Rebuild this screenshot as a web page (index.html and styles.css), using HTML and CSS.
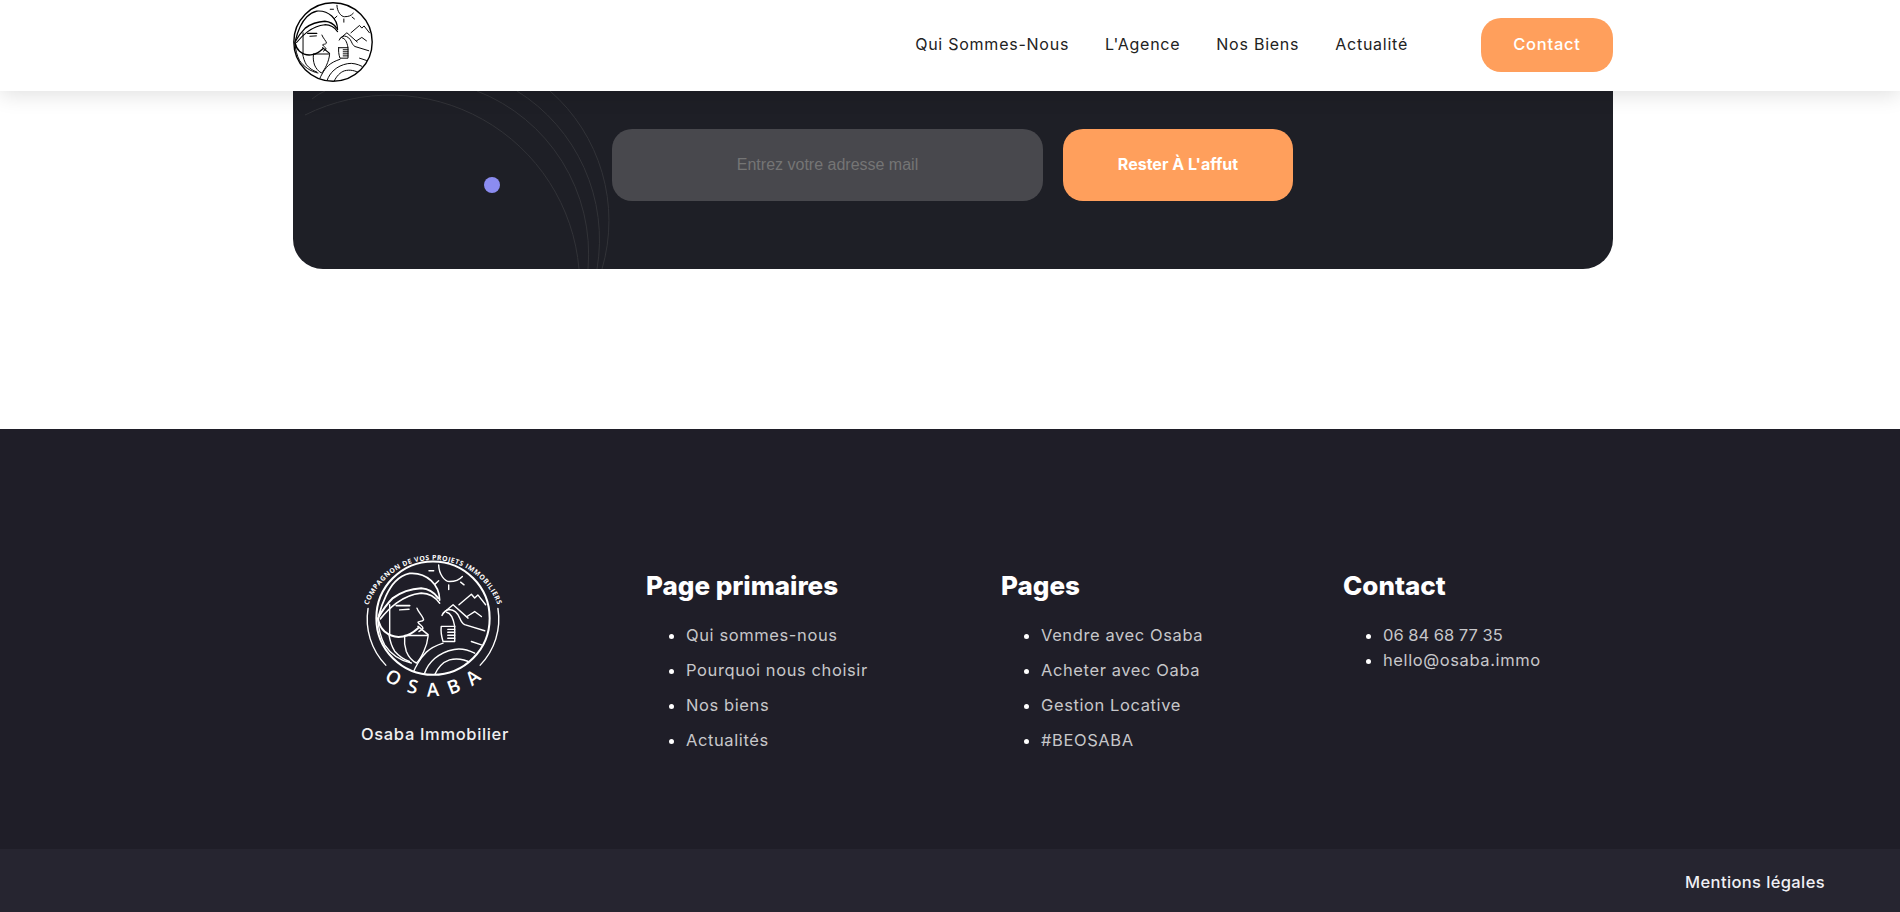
FILE: index.html
```html
<!DOCTYPE html>
<html>

<head>
    <title>Osaba Immobilier</title>
    <link rel="stylesheet" href="styles.css">
</head>

<body>
    <svg class="defs" width="0" height="0">
        <defs>
            <clipPath id="disc">
                <circle cx="50" cy="50" r="48"></circle>
            </clipPath>
            <g id="osaba-art" fill="none" stroke="currentColor" stroke-linecap="round" stroke-linejoin="round">
                <circle cx="50" cy="50" r="48" stroke-width="1.7"></circle>
                <g clip-path="url(#disc)" stroke-width="1.2">
                    <!-- sun -->
                    <path d="M54.8 5C55 13 60 19 64 19C69 19 72 18 74.9 14.7"></path>
                    <path d="M46.6 9.9H50.6M54.8 18.4L51.7 21.2M63.3 21.8V25.7M73.4 19.5L76.3 21.8"></path>
                    <!-- helmet -->
                    <path stroke-width="1.5" d="M4 48C7 36 13 24 18 19C22 15 26 13 30.2 12.1C45 11 55.6 22 55.6 34.7"></path>
                    <path stroke-width="1.7" d="M3.4 50C8 42 12 37 16 33C24 27 32 25 40 24.6C46 25 51 28 54.4 33"></path>
                    <path stroke-width="1.4" d="M5.4 50.6C10 45 14 41 19 37.3C26 32 33 29.5 40 28.8C47 29 52 32 55.6 37.3"></path>
                    <!-- face -->
                    <path d="M13.3 38.7V64"></path>
                    <path stroke-width="1.5" d="M18.9 39.3H30.2"></path>
                    <path d="M21.7 43L29.7 42.5"></path>
                    <path d="M36.4 41.5C37.5 45 42 49 42 51.4C41 53 38 52.5 37.3 53.4C38 55.5 41.5 56.5 41.5 58.5C41 60 39 60.5 38.1 61.3"></path>
                    <path stroke-width="1.7" d="M3.4 50.6C4.5 56 7 59.5 9 61.3C14 65.5 19.5 66.5 24.6 65.5C30 64.5 34 61.5 37.3 58.5"></path>
                    <path stroke-width="1.4" d="M37.3 57L45.8 64"></path>
                    <path d="M26 64.7H45.8"></path>
                    <!-- beard -->
                    <path d="M26 65.5C25.5 70 26 74 27.4 78.2C29 82 32 86 36 88C40 84 45 74 45.8 65.5"></path>
                    <path d="M3.4 51.4C4 60 6 67 9 72.6C14 80 22 86 31.6 88"></path>
                    <path d="M12.7 64C13.5 69 15 74 17.5 78C21 82 25 85 30 86.7"></path>
                    <!-- shoulder and arcs -->
                    <path d="M58.5 71.2C53 73 48 75.5 44.4 78.8C41 82 39 85 37.3 88C35.5 91 34.5 93 33.6 95.2"></path>
                    <path d="M42.9 96.6C46 88 54 79 68 76.5C74 75.5 80 77 85.3 79.7"></path>
                    <path d="M51.4 98C54 92 59 87 64 85.3C71 83.5 77 85 82.5 88"></path>
                    <path d="M82.5 69.8L91 72.6"></path>
                    <!-- hand -->
                    <path d="M57.6 47.7C59 45 61 43 64 42.7C68 43 71 46 72.6 49.8C73.5 52 75 54.5 76.8 55.5L93.8 60.7"></path>
                    <path d="M61.5 45C64.5 45.5 67 49 68.4 57"></path>
                    <path d="M57 57H68.4V69.8H58.5C57 65 56.5 61 57 57Z"></path>
                    <path d="M62.5 59.5H68.4M62.5 62H68.4M62.5 64.5H68.4M62.5 67H68.4"></path>
                    <!-- mountains -->
                    <path d="M58.5 45.8L67 38.7L79.7 50"></path>
                    <path d="M72 38.7L82.5 29.7L85.3 33L88 30.3L94.6 38.7"></path>
                    <path d="M78.8 48.6L85.3 44.4L91 48.6"></path>
                </g>
            </g>
        </defs>
    </svg>

    <header class="site-header">
        <div class="header-inner">
            <svg class="header-logo" viewBox="1 1 98 98">
                <use href="#osaba-art"></use>
            </svg>
            <nav class="main-nav">
                <a href="#">Qui Sommes-Nous</a>
                <a href="#">L'Agence</a>
                <a href="#">Nos Biens</a>
                <a href="#">Actualité</a>
            </nav>
            <a class="contact-btn" href="#">Contact</a>
        </div>
    </header>

    <section class="newsletter">
        <div class="newsletter-card">
            <svg class="newsletter-lines" viewBox="0 0 320 178">
                <path d="M12 24A190 190 0 0 1 286 178"></path>
                <path d="M184 0A175 175 0 0 1 295 178"></path>
                <path d="M224 0A175 175 0 0 1 304 178"></path>
                <path d="M257 0A172 172 0 0 1 309 178"></path>
                <path d="M19 8Q25 3 32 0"></path>
            </svg>
            <span class="newsletter-dot"></span>
            <form class="newsletter-form">
                <input type="text" placeholder="Entrez votre adresse mail">
                <button type="submit">Rester À L'affut</button>
            </form>
        </div>
    </section>

    <footer class="site-footer">
        <div class="footer-main">
            <div class="footer-brand">
                <svg class="footer-logo" viewBox="-9.3 -6 118.6 127">
                    <use href="#osaba-art"></use>
                    <g fill="none" stroke="currentColor" stroke-width="1.2" stroke-linecap="round">
                        <path d="M-5 41.8A56 56 0 0 0 10 89.8"></path>
                        <path d="M105 41.8A56 56 0 0 1 90 89.8"></path>
                    </g>
                    <path id="ring-top" fill="none" d="M-7 46.7A58.3 58.3 0 0 1 107 46.7"></path>
                    <path id="ring-bottom" fill="none" d="M-10 77.5A66 66 0 0 0 110 77.5"></path>
                    <text class="logo-tagline">
                        <textPath href="#ring-top" startOffset="50%">COMPAGNON DE VOS PROJETS IMMOBILIERS</textPath>
                    </text>
                    <text class="logo-name">
                        <textPath href="#ring-bottom" startOffset="53%">OSABA</textPath>
                    </text>
                </svg>
                <p>Osaba Immobilier</p>
            </div>

            <div class="footer-col">
                <h3>Page primaires</h3>
                <ul>
                    <li>Qui sommes-nous</li>
                    <li>Pourquoi nous choisir</li>
                    <li>Nos biens</li>
                    <li>Actualités</li>
                </ul>
            </div>

            <div class="footer-col">
                <h3>Pages</h3>
                <ul>
                    <li>Vendre avec Osaba</li>
                    <li>Acheter avec Oaba</li>
                    <li>Gestion Locative</li>
                    <li>#BEOSABA</li>
                </ul>
            </div>

            <div class="footer-col footer-contact">
                <h3>Contact</h3>
                <ul>
                    <li class="footer-phone">06 84 68 77 35</li>
                    <li>hello@osaba.immo</li>
                </ul>
            </div>
        </div>

        <div class="footer-bar">
            <a href="#">Mentions légales</a>
        </div>
    </footer>
</body>

</html>
```

FILE: styles.css
```css
body {
    margin: 0;
    font-family: Inter, "Open Sans", sans-serif;
    background-color: #fff;
    overflow: hidden;
}

a {
    color: inherit;
    text-decoration: none;
}

.defs {
    display: block;
    height: 0;
}

.site-header {
    position: relative;
    z-index: 2;
    height: 91px;
    background-color: #fff;
    box-shadow: 0 4px 20px rgba(0, 0, 0, 0.12);
}

.header-inner {
    display: flex;
    align-items: center;
    width: 1320px;
    height: 91px;
    margin-left: 293px;
}

.header-logo {
    width: 80px;
    height: 80px;
    margin-top: -8px;
    color: #000;
}

.main-nav {
    display: flex;
    gap: 36px;
    margin-left: auto;
    margin-right: 73px;
    padding-bottom: 3px;
    font-size: 16px;
    letter-spacing: 0.75px;
    color: #222;
}

.contact-btn {
    display: flex;
    align-items: center;
    justify-content: center;
    box-sizing: border-box;
    width: 132px;
    height: 54px;
    margin-top: -1px;
    padding-bottom: 2px;
    border-radius: 20px;
    background-color: #ff9f5c;
    color: #fff;
    font-size: 16.5px;
    font-weight: 500;
    letter-spacing: 0.75px;
}

.newsletter {
    height: 338px;
}

.newsletter-card {
    position: relative;
    width: 1320px;
    height: 178px;
    margin-left: 293px;
    border-radius: 0 0 30px 30px;
    background-color: #1e1f26;
    overflow: hidden;
}

.newsletter-lines {
    position: absolute;
    left: 0;
    top: 0;
    width: 320px;
    height: 178px;
    fill: none;
    stroke: #323338;
    stroke-width: 1;
}

.newsletter-dot {
    position: absolute;
    left: 191px;
    top: 86px;
    width: 16px;
    height: 16px;
    border-radius: 50%;
    background-color: #8b8cf0;
}

.newsletter-form {
    position: relative;
    display: flex;
    gap: 20px;
    padding: 38px 0 0 319px;
}

.newsletter-form input {
    width: 431px;
    height: 72px;
    box-sizing: border-box;
    padding: 0 20px;
    border: none;
    border-radius: 20px;
    background-color: #48484d;
    color: #fff;
    font-family: "Liberation Sans", Arial, sans-serif;
    font-size: 16px;
    text-align: center;
}

.newsletter-form button {
    width: 230px;
    height: 72px;
    padding: 0 0 2px;
    border: none;
    border-radius: 20px;
    background-color: #ff9f5c;
    color: #fff;
    font-family: Inter, sans-serif;
    font-size: 16px;
    font-weight: 700;
    cursor: pointer;
}

.site-footer {
    color: #fff;
}

.footer-main {
    display: grid;
    grid-template-columns: 353px 355px 342px 1fr;
    box-sizing: border-box;
    height: 420px;
    padding: 123px 0 0 293px;
    background-color: #1f1e28;
}

.footer-brand {
    width: 280px;
    text-align: center;
}

.footer-logo {
    display: block;
    width: 140px;
    height: 150px;
    margin: 0 auto;
    color: #fff;
}

.logo-tagline {
    fill: #fff;
    font-family: "Open Sans", sans-serif;
    font-size: 5.8px;
    font-weight: 700;
    letter-spacing: 0.42px;
    text-anchor: middle;
}

.logo-name {
    fill: #fff;
    font-family: "Open Sans", sans-serif;
    font-size: 16px;
    font-weight: 600;
    letter-spacing: 9px;
    text-anchor: middle;
}

.footer-brand p {
    margin: 20px 0 0;
    padding-left: 4px;
    font-size: 16.5px;
    font-weight: 500;
    letter-spacing: 0.65px;
    line-height: 24px;
    color: #f0f0f0;
}

.footer-col {
    padding-top: 18px;
}

.footer-col h3 {
    margin: 0 0 21px;
    font-size: 26px;
    font-weight: 800;
    line-height: 32px;
    color: #fff;
}

.footer-col ul {
    margin: 0;
    padding-left: 40px;
    color: #c7c7ca;
    font-size: 16.5px;
    letter-spacing: 0.6px;
    line-height: 25px;
}

.footer-col li {
    margin-bottom: 10px;
}

.footer-col li::marker {
    color: #fff;
}

.footer-contact li {
    margin-bottom: 0;
}

.footer-contact .footer-phone {
    letter-spacing: 0;
}

.footer-bar {
    display: flex;
    align-items: center;
    justify-content: flex-end;
    box-sizing: border-box;
    height: 63px;
    padding: 2px 75px 0 0;
    background-color: #262530;
    color: #f0f0f5;
    font-size: 16.5px;
    font-weight: 500;
    letter-spacing: 0.38px;
}
```
